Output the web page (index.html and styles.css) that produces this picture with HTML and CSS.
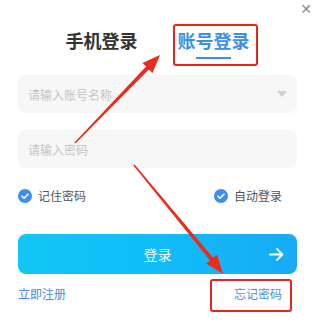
FILE: index.html
```html
<!DOCTYPE html>
<html lang="zh">
<head>
<meta charset="utf-8">
<link rel="stylesheet" href="styles.css">
</head>
<body>
<div class="dialog">
  <div class="close">✕</div>
  <div class="tabs">
    <div class="tab">手机登录</div>
    <div class="tab active">账号登录</div>
  </div>
  <div class="field">
    <span class="ph">请输入账号名称</span>
    <span class="caret"></span>
  </div>
  <div class="field">
    <span class="ph">请输入密码</span>
  </div>
  <div class="checks">
    <label class="check"><span class="box"><svg width="14" height="14" viewBox="0 0 14 14"><circle cx="7" cy="7" r="7" fill="#3a8ff0"/><path d="M4 7.2l2 2 4-4" fill="none" stroke="#fff" stroke-width="1.6" stroke-linecap="round" stroke-linejoin="round"/></svg></span>记住密码</label>
    <label class="check"><span class="box"><svg width="14" height="14" viewBox="0 0 14 14"><circle cx="7" cy="7" r="7" fill="#3a8ff0"/><path d="M4 7.2l2 2 4-4" fill="none" stroke="#fff" stroke-width="1.6" stroke-linecap="round" stroke-linejoin="round"/></svg></span>自动登录</label>
  </div>
  <div class="btn">
    <span>登录</span>
    <svg class="arrow" width="15" height="13" viewBox="0 0 15 13"><path d="M1 6.5h12.5M8 1l5.5 5.5L8 12" fill="none" stroke="#fff" stroke-width="1.8" stroke-linecap="round" stroke-linejoin="round"/></svg>
  </div>
  <div class="links">
    <span>立即注册</span>
    <span>忘记密码</span>
  </div>

  <div class="mark mark1"></div>
  <div class="mark mark2"></div>
  <svg class="annot" width="317" height="327" viewBox="0 0 317 327">
    <polygon points="75.5,143.5 148.9,69.4 152.5,72.9 160,55 142.5,63.1 146.1,66.6 74.5,142.5" fill="#ee2a1b"/>
    <polygon points="133.4,165.4 210.1,260.4 206.2,263.6 223,274 217.0,254.6 213.1,257.8 134.6,164.6" fill="#ee2a1b"/>
  </svg>
</div>
</body>
</html>
```
FILE: styles.css
```css
html, body {
  margin: 0;
  padding: 0;
  background: #fff;
}
body {
  font-family: "Noto Sans CJK SC", "Noto Sans", sans-serif;
  width: 317px;
  height: 327px;
  overflow: hidden;
}
.dialog {
  position: relative;
  width: 317px;
  height: 327px;
  box-sizing: border-box;
  padding: 0 20px 0 18px;
}
.close {
  position: absolute;
  right: 5px;
  top: 1px;
  font-size: 14px;
  color: #8a8a8a;
  font-family: "DejaVu Sans", sans-serif;
}
.tabs {
  display: flex;
  justify-content: center;
  gap: 40px;
  padding-top: 27px;
  height: 48px;
  box-sizing: border-box;
}
.tab {
  font-size: 18px;
  font-weight: 700;
  color: #333;
  line-height: 26px;
  position: relative;
}
.tab.active {
  color: #3d8fe3;
}
.tab.active::after {
  content: "";
  position: absolute;
  left: 18px;
  width: 35px;
  top: 30px;
  height: 2px;
  background: #3d8fe3;
}
.field {
  margin-top: 27px;
  height: 38px;
  border-radius: 8px;
  background: #f7f7f7;
  display: flex;
  align-items: center;
  justify-content: space-between;
  padding: 0 10px;
}
.field + .field {
  margin-top: 17px;
}
.ph {
  font-size: 12px;
  color: #c4c4c4;
}
.caret {
  width: 0;
  height: 0;
  border-left: 5px solid transparent;
  border-right: 5px solid transparent;
  border-top: 6px solid #d0d0d0;
}
.checks {
  display: flex;
  justify-content: space-between;
  padding: 0 15px 0 0;
  margin-top: 19px;
}
.check {
  display: flex;
  align-items: center;
  gap: 6px;
  font-size: 12px;
  color: #555;
  line-height: 18px;
}
.box {
  display: flex;
}
.btn {
  margin-top: 29px;
  height: 40px;
  border-radius: 8px;
  background: linear-gradient(90deg, #12c6f6 0%, #10bdf7 50%, #19aaf6 100%);
  display: flex;
  align-items: center;
  justify-content: center;
  position: relative;
  color: #fff;
  font-size: 14px;
}
.btn .arrow {
  position: absolute;
  right: 13px;
  top: 14px;
}
.links {
  display: flex;
  justify-content: space-between;
  padding-right: 15px;
  margin-top: 11px;
  font-size: 12px;
  color: #4a8fd8;
  line-height: 18px;
}
.mark {
  position: absolute;
  border: 2px solid #e0281e;
  border-radius: 3px;
  box-sizing: border-box;
}
.mark1 {
  left: 173px;
  top: 24px;
  width: 85px;
  height: 42px;
}
.mark2 {
  left: 210px;
  top: 279px;
  width: 82px;
  height: 33px;
}
.annot {
  position: absolute;
  left: 0;
  top: 0;
  pointer-events: none;
}
```
